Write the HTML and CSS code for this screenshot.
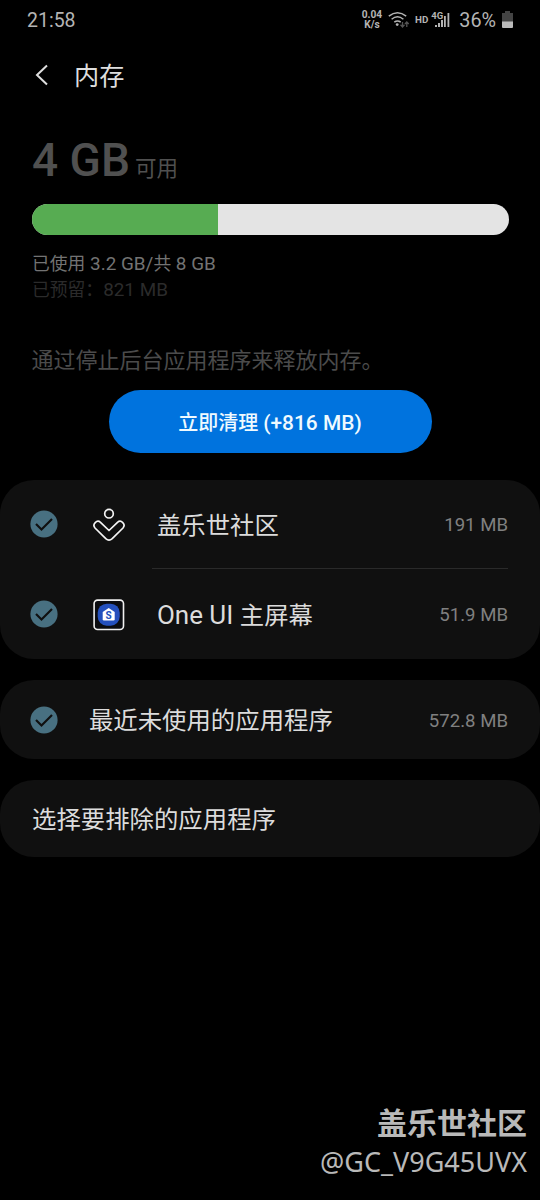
FILE: index.html
```html
<!DOCTYPE html>
<html lang="zh-CN">
<head>
<meta charset="utf-8">
<title>内存</title>
<link rel="stylesheet" href="styles.css">
</head>
<body>
<div class="screen">
  <div class="status">
    <span class="clock">21:58</span>
    <div class="indicators">
      <div class="speed"><span>0.04</span><span>K/s</span></div>
      <svg class="wifi" width="22" height="18" viewBox="0 0 22 18" fill="none" stroke="#b4b4b4" stroke-width="1.5">
        <path d="M.8 5.2Q9.5-1.8 18.2 5.2M3.6 8.2Q9.5 3.2 15.4 8.2M6.3 11.2Q9.5 8.6 12.7 11.2"/>
        <circle cx="9.2" cy="13.6" r="1.4" fill="#b4b4b4" stroke="none"/>
        <path d="M14.5 11v5M12.5 13.8l2 2.2 2-2.2M18.8 16v-5M16.9 13l1.9-2 1.9 2" stroke="#555" stroke-width="1.3"/>
      </svg>
      <span class="hd">HD</span>
      <div class="mobile">
        <svg width="20" height="18" viewBox="0 0 20 18" fill="#b4b4b4"><path d="M4 14h2v2H4zM7 12h2v4H7zM10 9h2v7h-2zM13 5h1.800v11H13zM16.500 2h1.800v14h-1.800z"/></svg>
        <span class="net">4G</span>
      </div>
      <span class="percent">36%</span>
      <svg class="battery" width="11" height="17" viewBox="0 0 11 17"><path d="M3 0h5v2h3v9H0V2h3z" fill="#444"/><path d="M0 10.500h11V16a1 1 0 0 1-1 1H1a1 1 0 0 1-1-1z" fill="#bbb"/></svg>
    </div>
  </div>

  <header class="header">
    <svg width="14" height="22" viewBox="0 0 14 22" fill="none" stroke="#dedede" stroke-width="2"><path d="M12 1.500 2 11l10 9.500"/></svg>
    <h1 class="title">内存</h1>
  </header>

  <section class="summary">
    <div class="available"><span class="amount">4 GB</span><span class="unit">可用</span></div>
    <div class="bar"><div class="used"></div></div>
    <div class="detail">已使用<span class="latin"> 3.2 GB/</span>共<span class="latin"> 8 GB</span></div>
    <div class="detail reserved">已预留：<span class="latin">821 MB</span></div>
    <p class="hint">通过停止后台应用程序来释放内存。</p>
    <button class="clean">立即清理 <span class="gain">(+816 MB)</span></button>
  </section>

  <section class="card apps">
    <div class="row">
      <svg class="check" width="28" height="28" viewBox="0 0 28 28"><circle cx="14" cy="14" r="13.600" fill="#487081"/><path d="M6 14l5.500 5.500L22 9" fill="none" stroke="#101010" stroke-width="2.200"/></svg>
      <svg class="icon" width="34" height="34" viewBox="0 0 34 34" fill="none" stroke="#f4f4f4" stroke-width="1.700"><circle cx="17" cy="5.700" r="4.300"/><path d="M17 22.500 8.500 14.300C5 11.300-.2 16 3 20L13.800 30.700Q17 33.700 20.200 30.700L31 20C34.200 16 29 11.300 25.500 14.300Z" stroke-linejoin="round"/></svg>
      <span class="name">盖乐世社区</span><span class="size">191 MB</span>
    </div>
    <div class="divider"></div>
    <div class="row second">
      <svg class="check" width="28" height="28" viewBox="0 0 28 28"><circle cx="14" cy="14" r="13.600" fill="#487081"/><path d="M6 14l5.500 5.500L22 9" fill="none" stroke="#101010" stroke-width="2.200"/></svg>
      <svg class="icon" width="34" height="34" viewBox="0 0 34 34"><rect x="2.100" y="2.100" width="29.400" height="29.400" rx="3.500" fill="#0b0c10" stroke="#f0f0f0" stroke-width="1.600"/><rect x="5.700" y="5.700" width="22" height="22" rx="9" fill="#2450bd"/><path d="M16.700 10l6 4v7.200q0 1.300-1.300 1.300h-9.400q-1.300 0-1.300-1.300v-7.200z" fill="#fff"/><text x="16.700" y="20.700" class="glyph">S</text></svg>
      <span class="name"><span class="brand">One UI </span>主屏幕</span><span class="size">51.9 MB</span>
    </div>
  </section>

  <section class="card recent">
    <div class="row">
      <svg class="check" width="28" height="28" viewBox="0 0 28 28"><circle cx="14" cy="14" r="13.600" fill="#487081"/><path d="M6 14l5.500 5.500L22 9" fill="none" stroke="#101010" stroke-width="2.200"/></svg>
      <span class="name">最近未使用的应用程序</span><span class="size">572.8 MB</span>
    </div>
  </section>

  <section class="card exclude"><span class="name">选择要排除的应用程序</span></section>

  <footer class="signature">
    <span class="community">盖乐世社区</span>
    <span class="user">@GC_V9G45UVX</span>
  </footer>
</div>
</body>
</html>
```
FILE: styles.css
```css
* { box-sizing: border-box; }
body { margin: 0; background: #000; }
.screen {
  display: flex;
  flex-direction: column;
  width: 540px;
  height: 1200px;
  overflow: hidden;
  font-family: Roboto, "Noto Sans CJK SC", sans-serif;
  white-space: nowrap;
}
.status {
  display: flex;
  justify-content: space-between;
  align-items: center;
  height: 40px;
  padding: 0 27px;
  color: #b4b4b4;
}
.clock { font-size: 19.5px; }
.indicators { display: flex; align-items: center; }
.speed {
  display: flex;
  flex-direction: column;
  align-items: center;
  width: 22px;
  font-size: 10.2px;
  font-weight: 700;
  line-height: 10px;
}
.wifi { margin-left: 5px; }
.hd { margin: 0 0 2px 5px; font-size: 9.8px; font-weight: 700; }
.mobile { position: relative; height: 18px; margin-left: 3px; }
.net { position: absolute; left: 0; top: 0; font-size: 9.5px; font-weight: 700; line-height: 10px; }
.percent { margin-left: 8px; font-size: 19.8px; }
.battery { margin: 0 0 2px 6px; }
.header {
  display: flex;
  align-items: center;
  height: 70px;
  padding-left: 35px;
}
.title { margin: 3px 0 0 25px; font-size: 25.2px; line-height: 30px; font-weight: 400; color: #dedede; }
.summary { display: flex; flex-direction: column; height: 370px; padding: 25px 32px 0; }
.available { display: flex; align-items: baseline; height: 69px; line-height: 50px; color: #505050; }
.amount { font-size: 46px; font-weight: 500; }
.unit { margin-left: 5px; font-size: 21.5px; }
.bar { height: 31.5px; margin: -0.5px -0.5px 0 -0.5px; border-radius: 16px; background: #e4e4e4; overflow: hidden; }
.used { width: 186px; height: 100%; background: #57ac52; }
.detail { height: 26px; margin: 16px 0 0; font-size: 17.8px; line-height: 26px; color: #737373; }
.latin { font-size: 18.9px; }
.reserved { margin-top: 0; color: #2b2b2b; }
.hint { height: 30px; margin: 43px 0 0 -0.5px; font-size: 22px; line-height: 30px; color: #4b4b4b; }
.clean {
  align-self: center;
  width: 323px;
  height: 63px;
  margin-top: 14px;
  padding: 2px 0 0;
  border: 0;
  border-radius: 32px;
  background: #0073de;
  color: #effaff;
  font: 500 20px/28px Roboto, "Noto Sans CJK SC", sans-serif;
}
.gain { font-size: 20.9px; }
.card { background: #101010; border-radius: 34px; padding: 0 32px; color: #dcdcdc; }
.apps { height: 179px; }
.row { display: flex; align-items: center; height: 88px; margin-left: -2px; }
.second { height: 90px; }
.check { margin-left: 0.4px; }
.icon { margin: 1px 0 0 34px; }
.name { margin: 3px 0 0 30.5px; font-size: 24.4px; line-height: 32px; }
.brand { font-size: 26px; }
.size { margin: 2px 0 0 auto; font-size: 18.6px; color: #808080; }
.divider { height: 1px; margin-left: 120px; background: #2a2a2a; }
.recent { height: 79px; margin-top: 21px; }
.recent .row { height: 79px; }
.exclude { display: flex; align-items: center; height: 77px; margin-top: 21px; }
.exclude .name { margin-left: 0; }
.signature { display: flex; flex-direction: column; align-items: flex-end; margin: auto 13px 19px 0; color: #b9b9b9; }
.community { font-size: 30px; line-height: 38px; font-weight: 700; }
.user { font-family: "Noto Sans", sans-serif; font-size: 27px; line-height: 38px; }
.glyph { font: 700 10px Roboto, sans-serif; fill: #2450bd; text-anchor: middle; }
```
